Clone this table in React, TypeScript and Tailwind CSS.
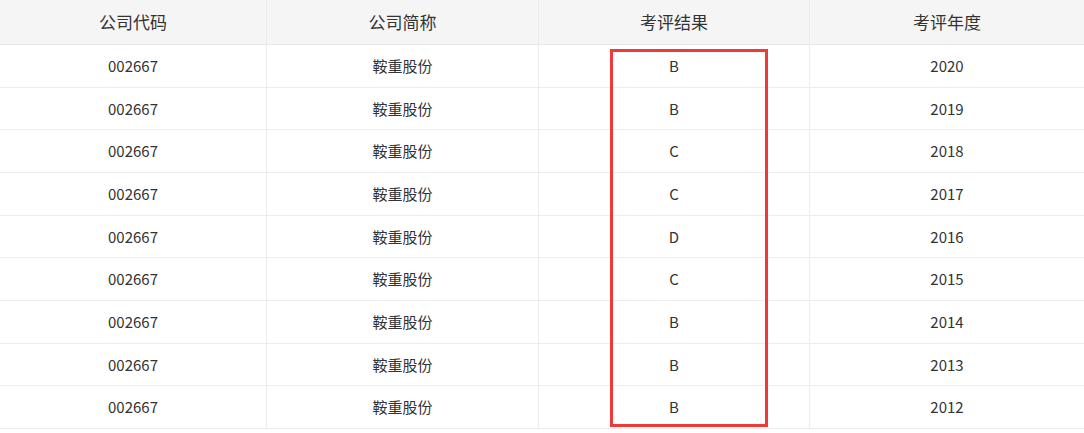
import React from "react";

const rows = [
  { code: "002667", name: "鞍重股份", result: "B", year: "2020" },
  { code: "002667", name: "鞍重股份", result: "B", year: "2019" },
  { code: "002667", name: "鞍重股份", result: "C", year: "2018" },
  { code: "002667", name: "鞍重股份", result: "C", year: "2017" },
  { code: "002667", name: "鞍重股份", result: "D", year: "2016" },
  { code: "002667", name: "鞍重股份", result: "C", year: "2015" },
  { code: "002667", name: "鞍重股份", result: "B", year: "2014" },
  { code: "002667", name: "鞍重股份", result: "B", year: "2013" },
  { code: "002667", name: "鞍重股份", result: "B", year: "2012" },
];

const cols = "grid grid-cols-[267px_272px_271px_1fr]";

export default function App() {
  return (
    <div
      className="relative w-[1084px] h-[433px] bg-white text-[#333]"
      style={{ fontFamily: '"Noto Sans CJK SC", "Noto Sans", sans-serif' }}
    >
      <div className={`${cols} h-[45px] bg-[#f5f5f5] border-b border-[#e8e8e8] text-[17px]`}>
        {["公司代码", "公司简称", "考评结果", "考评年度"].map((h, i) => (
          <div
            key={h}
            className={`flex items-center justify-center ${i < 3 ? "border-r border-[#ebebeb]" : ""}`}
          >
            {h}
          </div>
        ))}
      </div>
      {rows.map((r) => (
        <div key={r.year} className={`${cols} h-[42.67px] border-b border-[#ececec] text-[15px]`}>
          <div className="flex items-center justify-center pt-[1px] border-r border-[#ececec]">{r.code}</div>
          <div className="flex items-center justify-center pt-[1px] border-r border-[#ececec]">{r.name}</div>
          <div className="flex items-center justify-center pt-[1px] border-r border-[#ececec]">{r.result}</div>
          <div className="flex items-center justify-center pt-[1px]">{r.year}</div>
        </div>
      ))}
      {/* annotation box */}
      <div className="absolute left-[610px] top-[49px] w-[158px] h-[378px] border-[3px] border-[#f03a3a]" />
    </div>
  );
}
